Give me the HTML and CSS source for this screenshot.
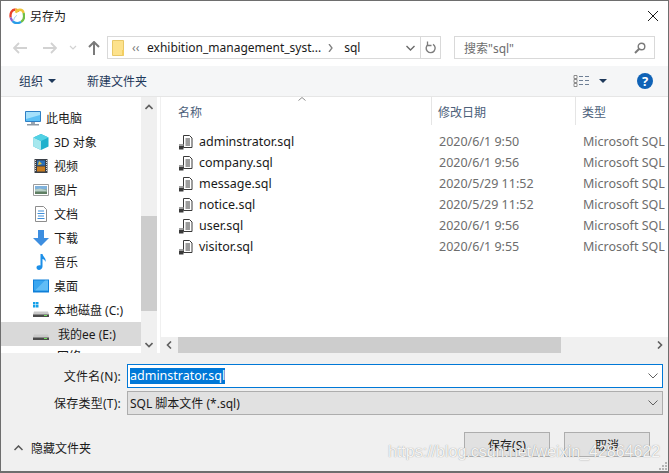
FILE: index.html
```html
<!DOCTYPE html>
<html lang="zh">
<head>
<meta charset="utf-8">
<title>另存为</title>
<link rel="stylesheet" href="styles.css">
</head>
<body>
<div class="window">
  <header class="titlebar">
    <svg class="app-logo" viewBox="0 0 16 16" width="16" height="16" fill="none" stroke-width="2.300"><path d="M1.700 9.500C.8 5 3 1.500 6.300 1.500" stroke="#e8412a"/><path d="M6.300 1.500C7.800 1.500 8.800 2.500 9.300 4" stroke="#f49b23"/><path d="M6.800 4.800C8.500 .6 13.600 .8 14.600 5" stroke="#eec53a"/><path d="M14.600 5C15.600 9 14.800 12.500 12 14" stroke="#6fbf45"/><path d="M12 14C9 15.600 5.500 15.200 3.500 13" stroke="#2a9de8"/><path d="M3.500 13C2.500 12 2 10.800 1.700 9.500" stroke="#8a5fd0"/><path d="M4.500 12.500C5.500 9 7 7.500 8 7.500" stroke="#9fd0e8" stroke-width="1"/></svg>
    <span class="title-text">另存为</span>
    <svg class="close" viewBox="0 0 10 10" width="10" height="10"><path d="M0 0L10 10M10 0L0 10" stroke="#1a1a1a" stroke-width="1" fill="none"/></svg>
  </header>

  <nav class="navbar">
    <svg class="nav-ic nav-back" viewBox="0 0 14 12" width="14" height="12"><path d="M6 1L1 6l5 5M1 6h13" stroke="#d2d2d2" stroke-width="1.800" fill="none"/></svg>
    <svg class="nav-ic nav-fwd" viewBox="0 0 14 12" width="14" height="12"><path d="M8 1l5 5-5 5M13 6H0" stroke="#d2d2d2" stroke-width="1.800" fill="none"/></svg>
    <svg class="nav-ic nav-down" viewBox="0 0 8 5" width="8" height="5"><path d="M1 1l3 3 3-3" stroke="#d2d2d2" stroke-width="1.200" fill="none"/></svg>
    <svg class="nav-ic nav-up" viewBox="0 0 12 14" width="12" height="14"><path d="M1 6l5-5 5 5M6 1v13" stroke="#7a7a7a" stroke-width="2" fill="none"/></svg>
    <div class="address">
      <svg class="folder" viewBox="0 0 13 16" width="13" height="16"><path d="M.5.500h11v15H.5z" fill="#fde28c" stroke="#e8c868"/><path d="M10 10h2v5.500h-2z" fill="#f3cf62"/></svg>
      <span class="crumb-more">‹‹</span>
      <span class="crumb">exhibition_management_syst...</span>
      <svg class="crumb-sep" viewBox="0 0 5 8" width="5" height="8"><path d="M1 0l3 4-3 4" stroke="#808080" stroke-width="1.300" fill="none"/></svg>
      <span class="crumb crumb-last">sql</span>
      <svg class="addr-chevron" viewBox="0 0 9 6" width="9" height="6"><path d="M.5 1l4 4 4-4" stroke="#6a6a6a" stroke-width="1.400" fill="none"/></svg>
      <span class="addr-refresh">
        <svg viewBox="0 0 12 13" width="12" height="13"><path d="M8 3.300A4.500 4.500 0 1 1 3 3.500" stroke="#7d7d7d" stroke-width="1.400" fill="none"/><path d="M2.500.500v4h4" stroke="#7d7d7d" stroke-width="1.300" fill="none"/></svg>
      </span>
    </div>
    <div class="search">
      <span class="search-text">搜索"sql"</span>
      <svg viewBox="0 0 12 12" width="12" height="12"><circle cx="7.500" cy="4.500" r="3.300" stroke="#7a7a7a" stroke-width="1.400" fill="none"/><path d="M5 7l-4 4" stroke="#7a7a7a" stroke-width="2" fill="none"/></svg>
    </div>
  </nav>

  <div class="toolbar">
    <span class="tool-organize">组织</span>
    <span class="tool-caret"></span>
    <span class="tool-new">新建文件夹</span>
    <svg class="tool-view" viewBox="0 0 17 13" width="17" height="13"><path d="M1 .500h3v3H1zM1 4.500h3v3H1zM1 8.500h3v3H1z" fill="#fff" stroke="#8c8c8c"/><path d="M6 1.500h4M12 1.500h4M6 5.500h4M12 5.500h4M6 9.500h4M12 9.500h4" stroke="#6e7f95"/></svg>
    <span class="tool-caret tool-caret-view"></span>
    <svg class="tool-help" viewBox="0 0 16 16" width="16" height="16"><circle cx="8" cy="8" r="8" fill="#0f62b6"/><text x="8" y="12.500" text-anchor="middle" class="help-mark">?</text></svg>
  </div>

  <main class="panes">
    <aside class="sidebar">
      <ul class="tree">
        <li class="tree-item tree-top">
          <svg viewBox="0 0 16 16" width="16" height="16"><path d="M.5 1.500h15v10H.5z" fill="#5cc0f5" stroke="#2f7fc4"/><path d="M1 2h14v3L1 9z" fill="#a5e0fb"/><path d="M6 12h4v2H6z" fill="#9aa6b2"/><path d="M2 14h12v1.500H2z" fill="#8d99a5"/></svg>
          <span>此电脑</span>
        </li>
        <li class="tree-item">
          <svg viewBox="0 0 16 16" width="16" height="16"><path d="M8 0l7.500 3.500v9L8 16 .5 12.500v-9z" fill="#1fb1cd"/><path d="M.5 3.500L8 7v9L.5 12.500z" fill="#a6e8ee"/><path d="M8 0l7.500 3.500L8 7 .5 3.500z" fill="#52d1e4"/></svg>
          <span>3D 对象</span>
        </li>
        <li class="tree-item">
          <svg viewBox="0 0 16 16" width="16" height="16"><path d="M1.500 1h13v14h-13z" fill="#3a3f47"/><path d="M4 2.500h8v5H4z" fill="#2a6fb8"/><path d="M4 8.500h8v5H4z" fill="#c77b1f"/><path d="M6 3l3 3-4 1z" fill="#e3c03f"/><path d="M2.500 2v12M13.500 2v12" stroke="#d8d8d8" stroke-dasharray="1 1"/></svg>
          <span>视频</span>
        </li>
        <li class="tree-item">
          <svg viewBox="0 0 16 16" width="16" height="16"><path d="M.5 2.500h15v11H.5z" fill="#fff" stroke="#9d9d9d"/><path d="M2 4h12v3.500H2z" fill="#7fb2dc"/><path d="M2 7.500h12V12H2z" fill="#5f7f63"/><path d="M2 7.500l5-1 7 2v1H2z" fill="#b8d0c8"/></svg>
          <span>图片</span>
        </li>
        <li class="tree-item">
          <svg viewBox="0 0 16 16" width="16" height="16"><path d="M2.500.500h8l3 3v12h-11z" fill="#fff" stroke="#8d8d8d"/><path d="M5 5h6M4.500 7.500h7M5 10h6M4.500 12.500h7" stroke="#3f8ed8"/></svg>
          <span>文档</span>
        </li>
        <li class="tree-item">
          <svg viewBox="0 0 16 16" width="16" height="16"><path d="M5 0h6v8h5l-8 8-8-8h5z" fill="#3d8ee0"/></svg>
          <span>下载</span>
        </li>
        <li class="tree-item">
          <svg viewBox="0 0 16 16" width="16" height="16"><path d="M7.500 0h2c.5 3 4 4 3 8-.5-2-2-3-3-3v7.500c0 2-2 3.500-3.500 3.500S3.500 15 3.500 13.500 5.500 11 7.500 11.500z" fill="#1c8fe8"/></svg>
          <span>音乐</span>
        </li>
        <li class="tree-item">
          <svg viewBox="0 0 16 16" width="16" height="16"><path d="M0 1.500h16v13H0z" fill="#0f7fd8"/><path d="M1 2.500h14v10H1z" fill="#39a6f0"/><path d="M2 12.500L12 2.500h3v10z" fill="#61bdf6"/></svg>
          <span>桌面</span>
        </li>
        <li class="tree-item">
          <svg viewBox="0 0 16 16" width="16" height="16"><path d="M0 0h2.500v2.500H0zM3 0h2.500v2.500H3zM0 3h2.500v2.500H0zM3 3h2.500v2.500H3z" fill="#14a0e8"/><path d="M1 9.500h14l1 3v2.500H0v-2.500z" fill="#c9c9c9"/><path d="M0 12.500h16V15H0z" fill="#4b4b4b"/><path d="M11 13h3v1h-3z" fill="#6fe05a"/></svg>
          <span>本地磁盘 (C:)</span>
        </li>
        <li class="tree-item tree-selected">
          <svg viewBox="0 0 16 16" width="16" height="16"><path d="M1 8.500h14l1 3V14H0v-2.500z" fill="#c9c9c9"/><path d="M0 11.500h16V14H0z" fill="#4b4b4b"/><path d="M11 12h3v1h-3z" fill="#6fe05a"/></svg>
          <span>我的ee (E:)</span>
        </li>
        <li class="tree-item tree-cut"><span>网络</span></li>
      </ul>
      <div class="vscroll">
        <svg class="sb-arrow" viewBox="0 0 8 6" width="8" height="6"><path d="M.5 5L4 1.500 7.500 5" stroke="#5f5f5f" stroke-width="1.600" fill="none"/></svg>
        <span class="sb-track"><span class="sb-thumb"></span></span>
        <svg class="sb-arrow" viewBox="0 0 8 6" width="8" height="6"><path d="M.5 1L4 4.500 7.500 1" stroke="#5f5f5f" stroke-width="1.600" fill="none"/></svg>
      </div>
    </aside>

    <section class="files">
      <div class="list-head">
        <span class="col col-name">名称</span>
        <span class="col col-date">修改日期</span>
        <span class="col col-type">类型</span>
        <svg class="sort-mark" viewBox="0 0 8 4" width="8" height="4"><path d="M.5 3.500L4 .5l3.500 3" stroke="#8c8c8c" fill="none"/></svg>
      </div>
      <div class="list-body">
        <div class="row"><svg class="sql-ic" viewBox="0 0 14 16" width="14" height="16"><use href="#sql"/></svg><span class="file-name">adminstrator.sql</span><span class="file-date">2020/6/1 9:50</span><span class="file-type">Microsoft SQL</span></div>
        <div class="row"><svg class="sql-ic" viewBox="0 0 14 16" width="14" height="16"><use href="#sql"/></svg><span class="file-name">company.sql</span><span class="file-date">2020/6/1 9:56</span><span class="file-type">Microsoft SQL</span></div>
        <div class="row"><svg class="sql-ic" viewBox="0 0 14 16" width="14" height="16"><use href="#sql"/></svg><span class="file-name">message.sql</span><span class="file-date">2020/5/29 11:52</span><span class="file-type">Microsoft SQL</span></div>
        <div class="row"><svg class="sql-ic" viewBox="0 0 14 16" width="14" height="16"><use href="#sql"/></svg><span class="file-name">notice.sql</span><span class="file-date">2020/5/29 11:52</span><span class="file-type">Microsoft SQL</span></div>
        <div class="row"><svg class="sql-ic" viewBox="0 0 14 16" width="14" height="16"><use href="#sql"/></svg><span class="file-name">user.sql</span><span class="file-date">2020/6/1 9:56</span><span class="file-type">Microsoft SQL</span></div>
        <div class="row"><svg class="sql-ic" viewBox="0 0 14 16" width="14" height="16"><use href="#sql"/></svg><span class="file-name">visitor.sql</span><span class="file-date">2020/6/1 9:55</span><span class="file-type">Microsoft SQL</span></div>
      </div>
      <div class="hscroll">
        <svg class="sb-arrow" viewBox="0 0 6 8" width="6" height="8"><path d="M5 .5L1.500 4 5 7.500" stroke="#5f5f5f" stroke-width="1.600" fill="none"/></svg>
        <span class="hs-thumb"></span>
        <svg class="sb-arrow" viewBox="0 0 6 8" width="6" height="8"><path d="M1 .5L4.500 4 1 7.500" stroke="#5f5f5f" stroke-width="1.600" fill="none"/></svg>
      </div>
    </section>
  </main>

  <footer class="bottom">
    <div class="form-row form-row-name">
      <span class="form-label">文件名(N):</span>
      <div class="field field-name">
        <span class="selected-text">adminstrator.sql</span>
        <svg viewBox="0 0 10 6" width="10" height="6"><path d="M.5 .5l4.500 4.500L9.500 .5" stroke="#606060" fill="none"/></svg>
      </div>
    </div>
    <div class="form-row">
      <span class="form-label">保存类型(T):</span>
      <div class="field field-type">
        <span>SQL 脚本文件 (*.sql)</span>
        <svg viewBox="0 0 10 6" width="10" height="6"><path d="M.5 .5l4.500 4.500L9.500 .5" stroke="#606060" fill="none"/></svg>
      </div>
    </div>
    <div class="actions">
      <svg class="hide-chevron" viewBox="0 0 9 6" width="9" height="6"><path d="M.5 5L4.500 1l4 4" stroke="#555" stroke-width="1.500" fill="none"/></svg>
      <span class="hide-label">隐藏文件夹</span>
      <button class="btn btn-save" type="button">保存(S)</button>
      <button class="btn" type="button">取消</button>
    </div>
    <span class="watermark">https://blog.csdn.net/weixin_42864622</span>
    <svg class="grip" viewBox="0 0 10 10" width="10" height="10"><path d="M7 1h2v2H7zM4 4h2v2H4zM7 4h2v2H7zM1 7h2v2H1zM4 7h2v2H4zM7 7h2v2H7z" fill="#b5b5b5"/></svg>
  </footer>
</div>
<svg class="defs" width="0" height="0">
  <symbol id="sql" viewBox="0 0 14 16">
    <path d="M4.500 1.500h6l2.500 2.500v9.500h-8.500z" fill="#fff" stroke="#3a3a3a"/>
    <path d="M6.500 5h4.500M6.500 7h4.500M6.500 9h4.500M6.500 11h4.500" stroke="#3a3a3a"/>
    <path d="M0 10.500h4.500v5H0z" fill="#3a3a3a"/>
    <path d="M0 10h4.500v2H0z" fill="#a0a0a0"/>
  </symbol>
</svg>
</body>
</html>
```

FILE: styles.css
```css
* { box-sizing: border-box; }
html, body { margin: 0; padding: 0; }
body {
  width: 669px;
  height: 473px;
  overflow: hidden;
  font-family: "Noto Sans", "Noto Sans CJK SC", sans-serif;
  font-size: 12px;
  color: #1a1a1a;
}
.defs { position: absolute; }
.window {
  width: 669px;
  height: 473px;
  display: flex;
  flex-direction: column;
  background: #fff;
  border: 1px solid #6e6e6e;
  border-bottom: 2px solid #6e6e6e;
  overflow: hidden;
}
.titlebar {
  height: 32px;
  display: flex;
  align-items: center;
  padding: 0 10px 2px 8px;
  flex: none;
}
.app-logo { margin-right: 5px; }
.title-text { font-size: 12px; flex: 1; }
.navbar {
  height: 33px;
  flex: none;
  display: flex;
  align-items: center;
  padding: 0 0 4px 12px;
}
.nav-ic { flex: none; }
.nav-back { margin-right: 16px; }
.nav-fwd { margin-right: 12px; }
.nav-down { margin-right: 11px; }
.nav-up { margin-right: 7px; }
.address {
  width: 334px;
  height: 23px;
  flex: none;
  border: 1px solid #d9d9d9;
  display: flex;
  align-items: center;
  padding-left: 4px;
}
.folder { margin-right: 7px; flex: none; }
.crumb-more { color: #7a7a7a; width: 15px; flex: none; }
.crumb { color: #1a1a1a; white-space: nowrap; }
.crumb-sep { margin: 0 11px 0 7px; flex: none; }
.crumb-last { flex: 1; }
.addr-chevron { margin-right: 5px; }
.addr-refresh {
  width: 20px;
  height: 21px;
  border-left: 1px solid #d9d9d9;
  display: flex;
  align-items: center;
  justify-content: center;
}
.search {
  width: 201px;
  height: 23px;
  flex: none;
  margin-left: 13px;
  border: 1px solid #d9d9d9;
  display: flex;
  align-items: center;
  justify-content: space-between;
  padding: 0 8px 0 9px;
}
.search-text { color: #6d6d6d; }
.toolbar {
  height: 31px;
  flex: none;
  background: #f5f6f7;
  border-bottom: 1px solid #e6e6e6;
  display: flex;
  align-items: center;
  padding-left: 18px;
  color: #1e395b;
}
.tool-caret {
  width: 0;
  height: 0;
  border-left: 4px solid transparent;
  border-right: 4px solid transparent;
  border-top: 4px solid #1e395b;
  margin-left: 5px;
}
.tool-new { margin-left: 31px; }
.tool-view { margin-left: auto; }
.tool-caret-view { margin-left: 9px; }
.tool-help { margin: 0 15px 0 30px; }
.help-mark { font-size: 13px; font-weight: 700; fill: #fff; }
.panes {
  height: 256px;
  flex: none;
  display: flex;
}
.sidebar {
  width: 156px;
  flex: none;
  display: flex;
  overflow: hidden;
}
.tree {
  list-style: none;
  margin: 0;
  padding: 9px 0 0;
  width: 140px;
  flex: none;
  height: 256px;
  overflow: hidden;
}
.tree-item {
  height: 24px;
  display: flex;
  align-items: center;
  gap: 5px;
  padding-left: 32px;
  white-space: nowrap;
}
.tree-item span { color: #1a1a1a; }
.tree-top { padding-left: 24px; }
.tree-selected { background: #d9d9d9; gap: 9px; }
.tree-cut {
  height: 7px;
  padding-left: 56px;
  padding-top: 6px;
  align-items: flex-start;
  line-height: 10px;
  overflow: hidden;
}
.vscroll {
  width: 16px;
  background: #f0f0f0;
  display: flex;
  flex-direction: column;
  align-items: center;
  padding: 7px 0 5px;
}
.sb-track { flex: 1; width: 16px; padding-top: 103px; padding-bottom: 28px; display: flex; margin: 3px 0; }
.sb-thumb { width: 16px; background: #cdcdcd; display: block; }
.files {
  flex: 1;
  display: flex;
  flex-direction: column;
  min-width: 0;
  border-left: 1px solid #f0f0f0;
  margin-left: 3px;
}
.list-head {
  height: 28px;
  flex: none;
  display: flex;
  position: relative;
  color: #4c607a;
  line-height: 31px;
}
.col { display: block; padding-left: 6px; border-right: 1px solid #e5e5e5; height: 28px; }
.col-name { width: 271px; padding-left: 17px; }
.col-date { width: 144px; }
.col-type { flex: 1; border-right: 0; }
.sort-mark { position: absolute; left: 137px; top: 0; }
.list-body { flex: 1; padding-top: 6px; min-height: 0; font-size: 12.5px; }
.row {
  height: 21px;
  display: flex;
  align-items: center;
  white-space: nowrap;
  overflow: hidden;
}
.sql-ic { margin-left: 18px; flex: none; }
.file-name { width: 240px; margin-left: 6px; flex: none; color: #1a1a1a; }
.file-date { width: 144px; flex: none; color: #6d6d6d; }
.file-type { color: #6d6d6d; }
.hscroll {
  height: 16px;
  flex: none;
  background: #f0f0f0;
  display: flex;
  align-items: center;
  padding-left: 5px;
  padding-right: 5px;
}
.hs-thumb { width: 383px; height: 16px; background: #cdcdcd; margin-left: 6px; margin-right: auto; }
.bottom {
  flex: 1;
  background: #f0f0f0;
  padding-top: 11px;
  position: relative;
  min-height: 0;
}
.form-row {
  display: flex;
  align-items: center;
  height: 24px;
  margin-bottom: 3px;
  padding-left: 4px;
}
.form-label { width: 116px; text-align: right; margin-right: 6px; color: #1a1a1a; letter-spacing: .25px; white-space: nowrap; }
.field {
  width: 536px;
  height: 24px;
  display: flex;
  align-items: center;
  justify-content: space-between;
  padding: 0 4px 0 2px;
}
.field-name { background: #fff; border: 1px solid #0078d7; }
.field-type { background: #e1e1e1; border: 1px solid #adadad; }
.selected-text { background: #0078d7; color: #fff; line-height: 16px; font-size: 12.5px; }
.actions {
  display: flex;
  align-items: center;
  margin-top: 17px;
  height: 25px;
  padding-left: 13px;
}
.hide-chevron { margin: 6px 8px 0 0; }
.hide-label { margin: 6px auto 0 0; color: #1a1a1a; }
.btn {
  width: 86px;
  height: 25px;
  background: #e1e1e1;
  border: 1px solid #adadad;
  font: inherit;
  color: #1a1a1a;
  padding: 0;
  margin-right: 18px;
}
.btn-save { margin-right: 14px; }
.watermark {
  position: absolute;
  left: 387px;
  top: 90px;
  font-family: "Liberation Sans", sans-serif;
  font-size: 16px;
  color: rgba(255, 255, 255, .92);
  text-shadow: 0 0 1px rgba(90, 90, 90, .7);
  white-space: nowrap;
}
.grip { position: absolute; right: 0; bottom: 0; }
```
